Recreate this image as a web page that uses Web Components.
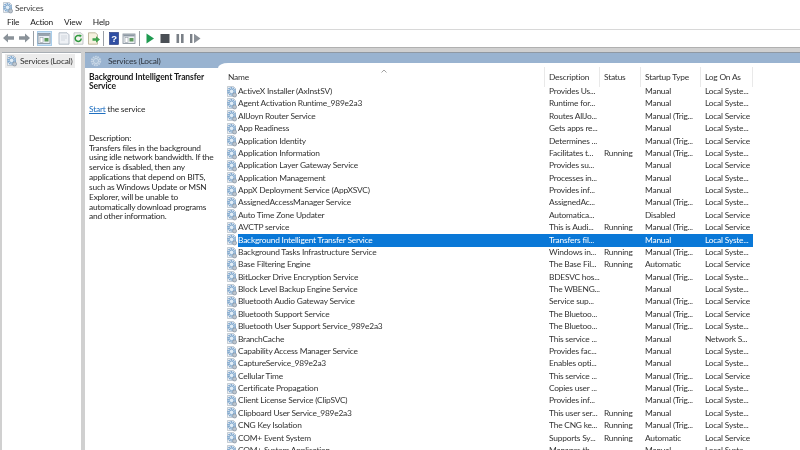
<!doctype html>
<html><head><meta charset="utf-8"><title>Services</title>
<style>
html,body{margin:0;padding:0;background:#fff;overflow:hidden}
body{width:800px;height:450px;font:8.4px Lato,sans-serif;letter-spacing:-.21px;color:#2a2a2a}
svc-app{filter:blur(.3px)}
</style></head><body>
<svc-app></svc-app>
<script>
const GEAR=`<svg width="12" height="12" viewBox="0 0 12 12" style="display:block;flex:none"><path d="M1.5 .5h6l2 2v8h-8z" fill="#eef1f5" stroke="#a3aebb" stroke-width=".6"/><circle cx="5.6" cy="5.4" r="3.6" fill="none" stroke="#7ba6cf" stroke-width="1.7" stroke-dasharray="1.5 .7"/><circle cx="5.6" cy="5.4" r="2.3" fill="#e2edf6" stroke="#5f90bf" stroke-width=".7"/><circle cx="8.6" cy="9" r="2" fill="#bcc5ce" stroke="#808c99" stroke-width=".6"/></svg>`;
const HGEAR=`<svg width="12" height="12" viewBox="0 0 12 12" style="display:block;flex:none"><circle cx="6" cy="6" r="4.2" fill="none" stroke="#c6d5e4" stroke-width="2" stroke-dasharray="1.6 .7"/><circle cx="6" cy="6" r="2.6" fill="#a8bfd6" stroke="#d8e3ee" stroke-width=".8"/></svg>`;
const DATA=[
["ActiveX Installer (AxInstSV)","Provides Us...","","Manual","Local Syste..."],
["Agent Activation Runtime_989e2a3","Runtime for...","","Manual","Local Syste..."],
["AllJoyn Router Service","Routes AllJo...","","Manual (Trig...","Local Service"],
["App Readiness","Gets apps re...","","Manual","Local Syste..."],
["Application Identity","Determines ...","","Manual (Trig...","Local Service"],
["Application Information","Facilitates t...","Running","Manual (Trig...","Local Syste..."],
["Application Layer Gateway Service","Provides su...","","Manual","Local Service"],
["Application Management","Processes in...","","Manual","Local Syste..."],
["AppX Deployment Service (AppXSVC)","Provides inf...","","Manual","Local Syste..."],
["AssignedAccessManager Service","AssignedAc...","","Manual (Trig...","Local Syste..."],
["Auto Time Zone Updater","Automatica...","","Disabled","Local Service"],
["AVCTP service","This is Audi...","Running","Manual (Trig...","Local Service"],
["Background Intelligent Transfer Service","Transfers fil...","","Manual","Local Syste...",1],
["Background Tasks Infrastructure Service","Windows in...","Running","Manual (Trig...","Local Syste..."],
["Base Filtering Engine","The Base Fil...","Running","Automatic","Local Service"],
["BitLocker Drive Encryption Service","BDESVC hos...","","Manual (Trig...","Local Syste..."],
["Block Level Backup Engine Service","The WBENG...","","Manual","Local Syste..."],
["Bluetooth Audio Gateway Service","Service sup...","","Manual (Trig...","Local Service"],
["Bluetooth Support Service","The Bluetoo...","","Manual (Trig...","Local Service"],
["Bluetooth User Support Service_989e2a3","The Bluetoo...","","Manual (Trig...","Local Syste..."],
["BranchCache","This service ...","","Manual","Network S..."],
["Capability Access Manager Service","Provides fac...","","Manual","Local Syste..."],
["CaptureService_989e2a3","Enables opti...","","Manual","Local Syste..."],
["Cellular Time","This service ...","","Manual (Trig...","Local Service"],
["Certificate Propagation","Copies user ...","","Manual (Trig...","Local Syste..."],
["Client License Service (ClipSVC)","Provides inf...","","Manual (Trig...","Local Syste..."],
["Clipboard User Service_989e2a3","This user ser...","Running","Manual","Local Syste..."],
["CNG Key Isolation","The CNG ke...","Running","Manual (Trig...","Local Syste..."],
["COM+ Event System","Supports Sy...","Running","Automatic","Local Service"],
["COM+ System Application","Manages th...","","Manual","Local Syste..."]];
const ICONS={
back:`<path d="M1 6l5-4.5v2.7h6v3.6H6v2.7z" fill="#8a9299"/>`,
fwd:`<path d="M13 6L8 1.5v2.7H2v3.6h6v2.7z" fill="#8a9299"/>`,
show:`<rect x="1" y="1.5" width="12" height="10" fill="#e8edf2" stroke="#7f8a96" stroke-width=".8"/><rect x="1.4" y="2" width="11.2" height="2" fill="#98a4b0"/><rect x="3" y="5.5" width="3" height="5" fill="#fff" stroke="#7f8a96" stroke-width=".5"/><rect x="7.5" y="6" width="4" height="3.5" fill="#5c9a5c"/>`,
page:`<path d="M2 .8h8l2 2v9.4H2z" fill="#eef1f5" stroke="#a3aebb" stroke-width=".8"/><path d="M4 4h6M4 6h6M4 8h4" stroke="#c5ccd5" stroke-width=".7"/>`,
refresh:`<path d="M2 .8h7l2 2v9.4H2z" fill="#f3f4f0" stroke="#b5bbc0" stroke-width=".8"/><path d="M9.2 6.5a3 3 0 1 1-1-2.3" fill="none" stroke="#2f9a3e" stroke-width="1.5"/><path d="M7 2.4l2.6.6-.7 2.6z" fill="#2f9a3e"/>`,
export:`<path d="M1.5 .8h7l2 2v9.4h-9z" fill="#f6f1df" stroke="#b3aa8c" stroke-width=".8"/><path d="M5.5 6.3h3.5V4.2l4 3.3-4 3.3V8.7H5.5z" fill="#3fa34d"/>`,
help:`<rect x="2.5" y=".5" width="9" height="12" fill="#2f4ea3" stroke="#1c2f75" stroke-width=".6"/><text x="7" y="10" text-anchor="middle" font-family="Liberation Sans" font-weight="700" font-size="9.5" fill="#fff">?</text>`,
view:`<rect x="1" y="2" width="12" height="9.5" fill="#eceff2" stroke="#7f8a96" stroke-width=".8"/><rect x="1.4" y="2.4" width="11.2" height="2" fill="#8d98a3"/><rect x="3" y="5.5" width="3" height="5" fill="#fff" stroke="#7f8a96" stroke-width=".5"/><rect x="7.5" y="6" width="4" height="3.5" fill="#5c9a5c"/>`,
play:`<path d="M3.5 1.5l7.5 5-7.5 5z" fill="#1e9a50"/>`,
stop:`<rect x="2.5" y="2" width="9" height="9" fill="#4a4f55"/>`,
pause:`<path d="M3.5 2h2.6v9H3.5zM8 2h2.6v9H8z" fill="#7a8087"/>`,
resume:`<path d="M2 2h2.4v9H2z" fill="#7a8087"/><path d="M6 1.7l6.5 4.8L6 11.3z" fill="#8b9198"/>`};

class SvcTitle extends HTMLElement{connectedCallback(){if(this.shadowRoot)return;this.attachShadow({mode:'open'}).innerHTML=`<style>:host{display:flex;align-items:center;gap:1px;height:14px;padding:1px 0 0 2px;letter-spacing:-.25px;color:#444}</style>${GEAR}<span><slot></slot></span>`}}
class SvcMenu extends HTMLElement{connectedCallback(){if(this.shadowRoot)return;this.attachShadow({mode:'open'}).innerHTML=`<style>:host{display:flex;align-items:center;gap:11px;height:14px;padding:0 0 0 7px;color:#222;border-bottom:1px solid #d8d8d8}</style><slot></slot>`}}
class SvcTool extends HTMLElement{connectedCallback(){if(this.shadowRoot)return;const on=this.hasAttribute('on');this.attachShadow({mode:'open'}).innerHTML=`<style>:host{display:flex;align-items:center;justify-content:center;width:15px;height:15px;${on?'background:#cfe4f7;box-shadow:inset 0 0 0 1px #a8cdea':''}}svg{display:block}</style><svg width="14" height="13" viewBox="0 0 14 13">${ICONS[this.getAttribute('i')]}</svg>`}}
class SvcSep extends HTMLElement{connectedCallback(){if(this.shadowRoot)return;this.attachShadow({mode:'open'}).innerHTML=`<style>:host{display:flex;justify-content:center;width:5.5px;height:15px}i{display:block;width:1px;background:#9aa0a6;height:100%}</style><i></i>`}}
class SvcToolbar extends HTMLElement{connectedCallback(){if(this.shadowRoot)return;this.attachShadow({mode:'open'}).innerHTML=`<style>:host{display:flex;align-items:center;height:17px;padding:0 0 0 1px;background:#fff}.g{width:4.5px}</style><svc-tool i="back"></svc-tool><svc-tool i="fwd"></svc-tool><svc-sep></svc-sep><svc-tool i="show" on></svc-tool><span class="g"></span><svc-tool i="page"></svc-tool><svc-tool i="refresh"></svc-tool><svc-tool i="export"></svc-tool><svc-sep></svc-sep><svc-tool i="help"></svc-tool><svc-tool i="view"></svc-tool><svc-sep></svc-sep><svc-tool i="play"></svc-tool><svc-tool i="stop"></svc-tool><svc-tool i="pause"></svc-tool><svc-tool i="resume"></svc-tool>`}}
class SvcTree extends HTMLElement{connectedCallback(){if(this.shadowRoot)return;this.attachShadow({mode:'open'}).innerHTML=`<style>:host{display:block;width:79px;flex:none;background:#fff;box-sizing:border-box;padding:1px 6px 0 3px;border-top:1px solid #a8aeb4}.n{display:flex;align-items:center;gap:2px;height:14px;padding-left:1px;background:#ececec;color:#333;white-space:nowrap}</style><div class="n">${GEAR}<span>Services (Local)</span></div>`}}
class SvcHeader extends HTMLElement{connectedCallback(){if(this.shadowRoot)return;this.attachShadow({mode:'open'}).innerHTML=`<style>:host{display:flex;align-items:center;gap:6px;height:15px;padding:0 0 0 5px;background:#99b3d0;color:#2f3640;white-space:nowrap}</style>${HGEAR}<span>Services (Local)</span>`}}
class SvcDetail extends HTMLElement{connectedCallback(){if(this.shadowRoot)return;this.attachShadow({mode:'open'}).innerHTML=`<style>:host{display:block;width:133px;flex:none;box-sizing:border-box;padding:4.5px 0 0 4px;line-height:9.85px;color:#2a2a2a;white-space:nowrap}b{display:block;font-weight:700;font-size:8.5px;letter-spacing:-.1px;color:#1b1b1b}a{color:#1f6fc0;text-decoration:underline}p{margin:0}.s{margin-top:12.5px}.d{margin-top:19.2px}</style><b>Background Intelligent Transfer<br>Service</b><p class="s"><a>Start</a> the service</p><p class="d">Description:<br>Transfers files in the background<br>using idle network bandwidth. If the<br>service is disabled, then any<br>applications that depend on BITS,<br>such as Windows Update or MSN<br>Explorer, will be unable to<br>automatically download programs<br>and other information.</p>`}}
const COLS='grid-template-columns:319px 55px 41px 60px 52px';
class SvcRow extends HTMLElement{connectedCallback(){if(this.shadowRoot)return;const d=DATA[+this.getAttribute('n')];this.attachShadow({mode:'open'}).innerHTML=`<style>:host{display:grid;${COLS};height:12.39px;line-height:13.4px;white-space:nowrap;color:#333}:host([sel]){color:#fff}.n{display:flex;align-items:center}.n span{flex:1;height:100%}:host([sel]) .n span,:host([sel]) .c{background:#0a78d7}.c{padding-left:4px}</style><div class="n">${GEAR}<span>${d[0]}</span></div><div class="c">${d[1]}</div><div class="c">${d[2]}</div><div class="c">${d[3]}</div><div class="c">${d[4]}</div>`}}
class SvcList extends HTMLElement{connectedCallback(){if(this.shadowRoot)return;const rows=DATA.map((d,i)=>`<svc-row n="${i}"${d[5]?' sel':''}></svc-row>`).join('');this.attachShadow({mode:'open'}).innerHTML=`<style>:host{display:block;width:527px;flex:none;margin:-5px 0 0 8px;position:relative;color:#333}.h{display:grid;${COLS};height:22px;padding-top:4px;box-sizing:border-box}.h div{padding-left:4px;line-height:20px;border-right:1px solid #e9e9e9;box-sizing:border-box}.h div:first-child{padding-left:2px}.car{position:absolute;left:155px;top:6px;width:6px;height:4px}</style><div class="h"><div>Name</div><div>Description</div><div>Status</div><div>Startup Type</div><div>Log On As</div></div><svg class="car" viewBox="0 0 6 4"><path d="M.5 3.5L3 1l2.5 2.5" fill="none" stroke="#8a8a8a" stroke-width=".8"/></svg>${rows}`}}
class SvcApp extends HTMLElement{connectedCallback(){if(this.shadowRoot)return;this.attachShadow({mode:'open'}).innerHTML=`<style>:host{display:flex;flex-direction:column;height:450px;width:800px;overflow:hidden;background:#fff}.work{flex:1;display:flex;background:#d0d0d0;padding:4px 0 0 2px;gap:4px;min-height:0;border-top:1px solid #b0b0b0}.pane{flex:1;display:flex;flex-direction:column;min-width:0;background:#fff;border-top:1px solid #8f98a2}.body{flex:1;display:flex;position:relative;background:#fff;min-height:0}.curve{position:absolute;left:133px;top:-5px;width:10px;height:5px;background:#99b3d0}.curve i{display:block;width:100%;height:100%;background:#fff;border-top-left-radius:10px 5px}.top{position:absolute;left:143px;right:0;top:-5px;height:5px;background:#fff}svc-detail,svc-list{z-index:1}</style><svc-title>Services</svc-title><svc-menu><span>File</span><span>Action</span><span>View</span><span>Help</span></svc-menu><svc-toolbar></svc-toolbar><div class="work"><svc-tree></svc-tree><div class="pane"><svc-header></svc-header><div class="body"><div class="curve"><i></i></div><div class="top"></div><svc-detail></svc-detail><svc-list></svc-list></div></div></div>`}}
for(const [n,c] of Object.entries({'svc-title':SvcTitle,'svc-menu':SvcMenu,'svc-tool':SvcTool,'svc-sep':SvcSep,'svc-toolbar':SvcToolbar,'svc-tree':SvcTree,'svc-header':SvcHeader,'svc-detail':SvcDetail,'svc-row':SvcRow,'svc-list':SvcList,'svc-app':SvcApp}))customElements.define(n,c);
</script></body></html>
